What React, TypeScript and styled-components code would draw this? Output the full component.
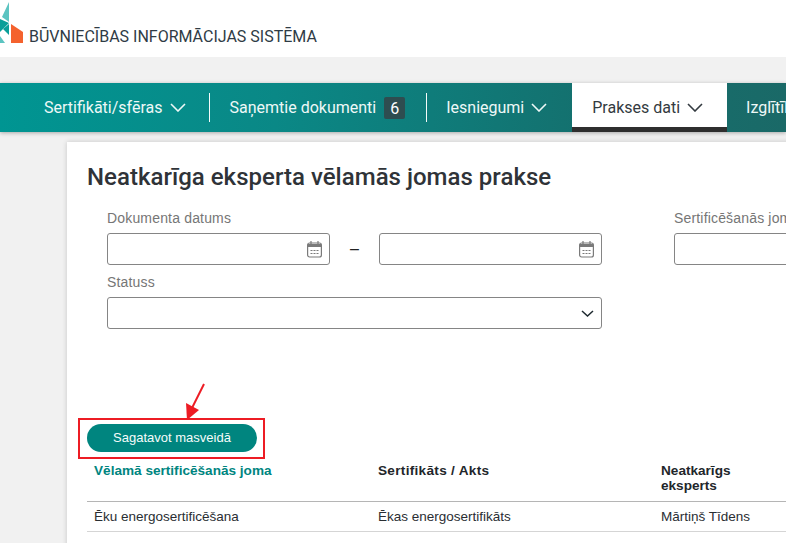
import React from "react";
import styled, { createGlobalStyle } from "styled-components";

const Global = createGlobalStyle`
  html, body { margin: 0; padding: 0; background: #f1f1f1; }
  body { font-family: "Liberation Sans", Arial, sans-serif; }
`;

const Page = styled.div`
  position: relative;
  width: 786px;
  height: 543px;
  overflow: hidden;
  background: #f1f1f1;
`;

const Header = styled.header`
  height: 57px;
  background: #fff;
  display: flex;
  align-items: flex-end;
`;

const Logo = styled.svg`
  width: 24px;
  height: 45px;
  flex: none;
  margin-bottom: 12px;
`;

const Brand = styled.div`
  margin: 0 0 11px 5px;
  font: 400 16px/18px Roboto, sans-serif;
  color: #2f3b45;
  white-space: nowrap;
`;

const Nav = styled.nav`
  margin-top: 26px;
  height: 49px;
  display: flex;
  padding-left: 23px;
  background: linear-gradient(90deg, #009592 0%, #0a8886 35%, #14706e 75%, #1a6967 100%);
  box-shadow: 0 1px 4px rgba(0, 0, 0, 0.3);
  white-space: nowrap;
`;

const NavItem = styled.div<{ $active?: boolean; $sep?: boolean; $left?: number; $right?: number }>`
  position: relative;
  flex: none;
  display: flex;
  align-items: center;
  gap: 7px;
  padding: 0 ${(p) => p.$right ?? 25}px 0 ${(p) => p.$left ?? 21}px;
  font: 400 16px/20px Roboto, sans-serif;
  color: ${(p) => (p.$active ? "#333a40" : "#eef8f7")};
  background: ${(p) => (p.$active ? "#fff" : "transparent")};
  box-shadow: ${(p) => (p.$active ? "inset 0 -5px 0 #2f2f2f" : "none")};
  &::after {
    content: "";
    display: ${(p) => (p.$sep ? "block" : "none")};
    position: absolute;
    right: 0;
    top: 10px;
    height: 29px;
    width: 1px;
    background: #f4fbfa;
  }
`;

const Badge = styled.span`
  min-width: 21px;
  height: 22px;
  border-radius: 2px;
  background: #2e4d50;
  color: #fff;
  font: 400 16px/24px Roboto, sans-serif;
  text-align: center;
  margin-left: 1px;
`;

const Chevron = styled.svg`
  width: 16px;
  height: 9px;
  flex: none;
  fill: none;
  stroke: currentColor;
  stroke-width: 1.6;
`;

const Card = styled.main`
  margin: 10px 0 0 67px;
  width: 900px;
  height: 420px;
  background: #fff;
  box-shadow: 0 0 5px rgba(0, 0, 0, 0.18);
  padding: 20px 0 0 20px;
`;

const Title = styled.h1`
  margin: 0;
  font: 500 24px/30px Roboto, sans-serif;
  letter-spacing: 0.02px;
  color: #2f3338;
  white-space: nowrap;
`;

const Filters = styled.div`
  display: grid;
  grid-template-columns: 495px 200px;
  column-gap: 72px;
  row-gap: 9px;
  margin: 18px 0 0 20px;
`;

const Field = styled.div`
  display: flex;
  flex-direction: column;
`;

const Label = styled.label`
  font: 400 14px/16px "Liberation Sans", Arial, sans-serif;
  letter-spacing: 0.17px;
  color: #767676;
  margin-bottom: 7px;
  white-space: nowrap;
`;

const DateRange = styled.div`
  display: flex;
  align-items: center;
  justify-content: space-between;
`;

const Dash = styled.span`
  font: 400 16px/16px "Liberation Sans", Arial, sans-serif;
  color: #222;
`;

const Input = styled.div<{ $width?: number }>`
  box-sizing: border-box;
  width: ${(p) => (p.$width ? `${p.$width}px` : "100%")};
  height: 32px;
  border: 1px solid #858585;
  border-radius: 3px;
  background: #fff;
  display: flex;
  align-items: center;
  justify-content: flex-end;
  padding-right: 7px;
`;

const CalendarIcon = styled.svg`
  width: 15px;
  height: 18px;
  fill: none;
  stroke: #7a7a7a;
`;

const SelectChevron = styled.svg`
  width: 13px;
  height: 7px;
  fill: none;
  stroke: #1f2a30;
  stroke-width: 1.5;
`;

const Toolbar = styled.div`
  margin-top: 95px;
`;

const PrimaryButton = styled.button`
  display: block;
  width: 170px;
  height: 28px;
  border: 0;
  border-radius: 14px;
  background: #00857f;
  color: #f6fcfb;
  font: 400 13px/28px "Liberation Sans", Arial, sans-serif;
  padding: 0;
`;

const TableRow = styled.div<{ $head?: boolean }>`
  display: grid;
  grid-template-columns: 284px 283px 1fr;
  box-sizing: border-box;
  height: ${(p) => (p.$head ? "50px" : "30px")};
  padding-top: ${(p) => (p.$head ? "11px" : "7px")};
  border-bottom: 1px solid ${(p) => (p.$head ? "#b5b5b5" : "#d5d5d5")};
`;

const HeadCell = styled.div<{ $accent?: boolean; $wide?: boolean }>`
  padding-left: 7px;
  width: 110px;
  font: 700 13.6px/15px "Liberation Sans", Arial, sans-serif;
  letter-spacing: ${(p) => (p.$wide ? "0.3px" : "0")};
  color: ${(p) => (p.$accent ? "#00857f" : "#22262a")};
  white-space: ${(p) => (p.$accent || p.$wide ? "nowrap" : "normal")};
`;

const Cell = styled.div`
  padding-left: 7px;
  font: 400 13.5px/16px "Liberation Sans", Arial, sans-serif;
  color: #2a2e33;
  white-space: nowrap;
`;

const RedFrame = styled.div`
  position: absolute;
  left: 78px;
  top: 418px;
  width: 187px;
  height: 41px;
  box-sizing: border-box;
  border: 2px solid #ed1c24;
`;

const RedArrow = styled.svg`
  position: absolute;
  left: 180px;
  top: 380px;
  width: 30px;
  height: 42px;
`;

const Down = () => (
  <Chevron viewBox="0 0 16 9">
    <path d="M1 1l7 7 7-7" />
  </Chevron>
);

const Calendar = () => (
  <CalendarIcon viewBox="0 0 15 18">
    <rect x="0.6" y="3" width="13.8" height="14" rx="2" strokeWidth="1.2" />
    <path d="M1 5.5h13" strokeWidth="3" />
    <path d="M4 1v3M11 1v3" strokeWidth="1.2" />
    <path d="M3.5 10.5h2M6.5 10.5h2M9.5 10.5h2M3.5 13.5h2M6.5 13.5h2M9.5 13.5h2" strokeWidth="1.2" />
  </CalendarIcon>
);

export default function App() {
  return (
    <Page>
      <Global />
      <Header>
        <Logo viewBox="0 0 24 45">
          <polygon points="2,17 9,2 9,22" fill="#5cc4c1" />
          <polygon points="0,19 9,23 0,32" fill="#0a9f99" />
          <polygon points="9,24 9,35 3,29" fill="#0a9f99" />
          <polygon points="0,36 5,43 0,43" fill="#5cc4c1" />
          <polygon points="11,24 23,32 23,43 11,43" fill="#f4622e" />
        </Logo>
        <Brand>BŪVNIECĪBAS INFORMĀCIJAS SISTĒMA</Brand>
      </Header>
      <Nav>
        <NavItem $sep $right={24}>Sertifikāti/sfēras <Down /></NavItem>
        <NavItem $sep $left={20} $right={22}>Saņemtie dokumenti <Badge>6</Badge></NavItem>
        <NavItem $left={19}>Iesniegumi <Down /></NavItem>
        <NavItem $active $left={20} $right={24}>Prakses dati <Down /></NavItem>
        <NavItem $left={19}>Izglītība <Down /></NavItem>
      </Nav>
      <Card>
        <Title>Neatkarīga eksperta vēlamās jomas prakse</Title>
        <Filters>
          <Field>
            <Label>Dokumenta datums</Label>
            <DateRange>
              <Input $width={223}><Calendar /></Input>
              <Dash>–</Dash>
              <Input $width={223}><Calendar /></Input>
            </DateRange>
          </Field>
          <Field>
            <Label>Sertificēšanās joma</Label>
            <Input />
          </Field>
          <Field>
            <Label>Statuss</Label>
            <Input>
              <SelectChevron viewBox="0 0 13 7"><path d="M1 1l5.5 5 5.5-5" /></SelectChevron>
            </Input>
          </Field>
        </Filters>
        <Toolbar>
          <PrimaryButton>Sagatavot masveidā</PrimaryButton>
        </Toolbar>
        <TableRow $head>
          <HeadCell $accent>Vēlamā sertificēšanās joma</HeadCell>
          <HeadCell $wide>Sertifikāts / Akts</HeadCell>
          <HeadCell>Neatkarīgs eksperts</HeadCell>
        </TableRow>
        <TableRow>
          <Cell>Ēku energosertificēšana</Cell>
          <Cell>Ēkas energosertifikāts</Cell>
          <Cell>Mārtiņš Tīdens</Cell>
        </TableRow>
      </Card>
      <RedFrame />
      <RedArrow viewBox="0 0 30 42">
        <path d="M24 4 L11 30" stroke="#ed1c24" strokeWidth="2" fill="none" />
        <polygon points="7,40 6,23 19,30" fill="#ed1c24" />
      </RedArrow>
    </Page>
  );
}
